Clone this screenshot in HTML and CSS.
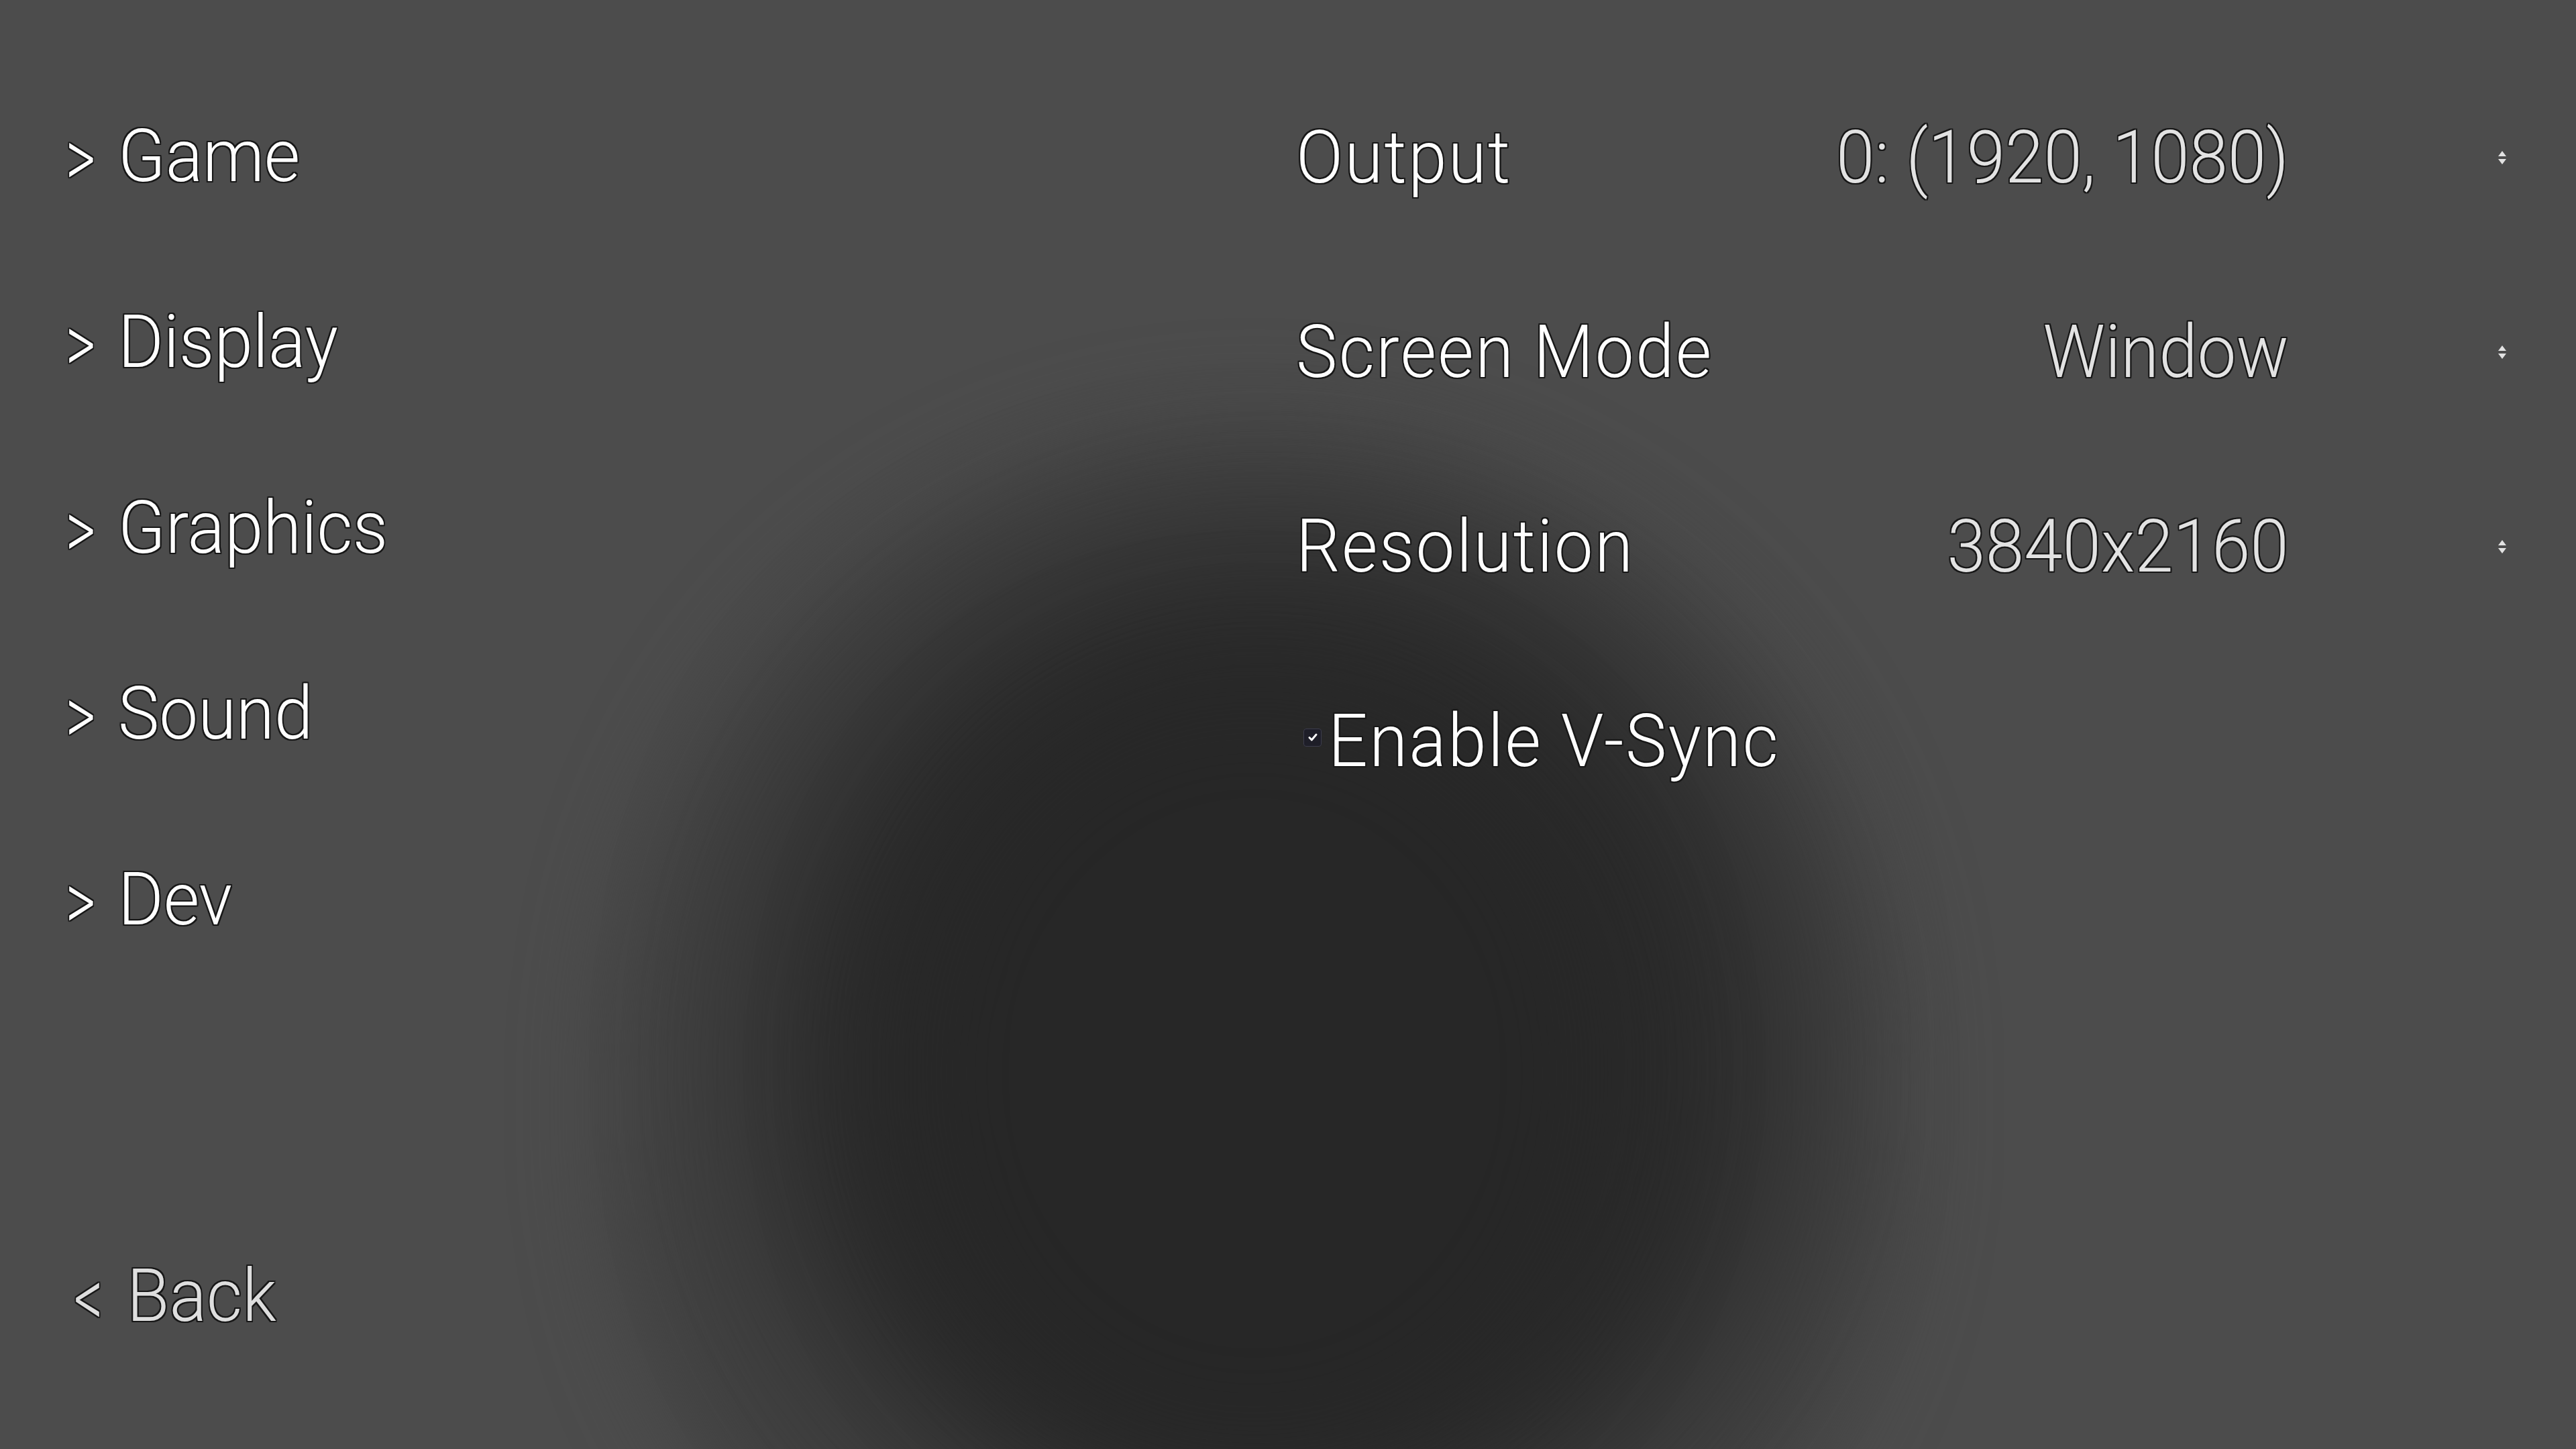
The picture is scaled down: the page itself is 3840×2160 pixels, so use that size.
FILE: index.html
```html
<!DOCTYPE html>
<html lang="en">
<head>
<meta charset="utf-8">
<title>Settings - Display</title>
<link rel="stylesheet" href="styles.css">
</head>
<body>
<div class="screen">
  <div class="backdrop">
    <div class="halo"></div>
    <div class="core"></div>
    <div class="core2"></div>
  </div>

  <nav class="nav">
    <div class="nav-items">
      <div class="nav-item"><span class="chev">&gt;</span><span class="txt">Game</span></div>
      <div class="nav-item"><span class="chev">&gt;</span><span class="txt">Display</span></div>
      <div class="nav-item"><span class="chev">&gt;</span><span class="txt">Graphics</span></div>
      <div class="nav-item"><span class="chev">&gt;</span><span class="txt">Sound</span></div>
      <div class="nav-item"><span class="chev">&gt;</span><span class="txt">Dev</span></div>
    </div>
    <div class="back"><span class="chev back-chev">&lt;</span><span class="txt">Back</span></div>
  </nav>

  <main class="settings">
    <div class="row">
      <span class="label"><span class="txt">Output</span></span>
      <span class="value"><span class="txt">0: (1920, 1080)</span></span>
      <span class="spin"><svg viewBox="0 0 12 20" width="12" height="20"><path d="M0 8 L6 0 L12 8 Z M0 12 L6 20 L12 12 Z" fill="#e2e2e2"/></svg></span>
    </div>
    <div class="row">
      <span class="label"><span class="txt">Screen Mode</span></span>
      <span class="value"><span class="txt">Window</span></span>
      <span class="spin"><svg viewBox="0 0 12 20" width="12" height="20"><path d="M0 8 L6 0 L12 8 Z M0 12 L6 20 L12 12 Z" fill="#e2e2e2"/></svg></span>
    </div>
    <div class="row">
      <span class="label"><span class="txt">Resolution</span></span>
      <span class="value"><span class="txt">3840x2160</span></span>
      <span class="spin"><svg viewBox="0 0 12 20" width="12" height="20"><path d="M0 8 L6 0 L12 8 Z M0 12 L6 20 L12 12 Z" fill="#e2e2e2"/></svg></span>
    </div>
    <div class="row check-row">
      <span class="checkbox"><svg viewBox="0 0 16 16" width="18" height="18"><path d="M3.5 8.5 L6.5 11.5 L12.5 4.5" fill="none" stroke="#ffffff" stroke-width="2.6" stroke-linecap="round" stroke-linejoin="round"/></svg></span>
      <span class="label"><span class="txt">Enable V-Sync</span></span>
    </div>
  </main>
</div>
</body>
</html>
```

FILE: styles.css
```css
html, body {
  margin: 0;
  padding: 0;
}
body {
  background: #4c4c4c;
  font-family: Roboto, "Liberation Sans", Arial, sans-serif;
  font-weight: 300;
  color: #ffffff;
}
.screen {
  position: relative;
  width: 3840px;
  height: 2160px;
  overflow: hidden;
  display: flex;
  background: #4c4c4c;
}

/* blurred dark silhouette behind the menu */
.backdrop {
  position: absolute;
  inset: 0;
  z-index: 0;
}
.halo {
  position: absolute;
  left: 920px;
  top: 640px;
  width: 1900px;
  height: 1900px;
  border-radius: 50% 50% 44% 44%;
  background: #404040;
  filter: blur(70px);
}
.core {
  position: absolute;
  left: 1140px;
  top: 800px;
  width: 1520px;
  height: 1500px;
  border-radius: 50% 50% 46% 46%;
  background: #2a2a2a;
  filter: blur(110px);
}
.core2 {
  position: absolute;
  left: 1320px;
  top: 1000px;
  width: 1100px;
  height: 1200px;
  border-radius: 50%;
  background: #272727;
  filter: blur(90px);
}

.nav, .settings {
  position: relative;
  z-index: 1;
}

.txt, .chev {
  text-shadow:
    2px 0 0 #181818, -2px 0 0 #181818, 0 2px 0 #181818, 0 -2px 0 #181818,
    2px 2px 0 #181818, -2px -2px 0 #181818, 2px -2px 0 #181818, -2px 2px 0 #181818,
    0 0 3px #181818;
}
.txt {
  display: inline-block;
  white-space: nowrap;
  transform: scaleX(0.94);
  transform-origin: left center;
}

/* left navigation */
.nav {
  width: 1834px;
  display: flex;
  flex-direction: column;
  padding-left: 98px;
  padding-top: 94px;
  box-sizing: border-box;
}
.nav-items {
  display: flex;
  flex-direction: column;
}
.nav-item {
  height: 277px;
  display: flex;
  align-items: center;
  font-size: 110px;
  line-height: 1;
}
.chev {
  display: inline-block;
  font-size: 122px;
  width: 78px;
  flex: 0 0 78px;
  transform: scaleX(0.7);
  transform-origin: left center;
  position: relative;
  top: 4px;
}
.back {
  margin-top: 383px;
  padding-left: 12px;
  display: flex;
  align-items: center;
  font-size: 110px;
  line-height: 1;
  color: #dedede;
  height: 140px;
}
.back-chev {
  width: 79px;
  flex: 0 0 79px;
}

/* right settings panel */
.settings {
  flex: 1;
  display: flex;
  flex-direction: column;
  padding-top: 90px;
  padding-left: 98px;
}
.row {
  height: 290px;
  display: flex;
  align-items: center;
  font-size: 110px;
  line-height: 1;
}
.label {
  color: #ffffff;
  width: 700px;
  white-space: nowrap;
  letter-spacing: 2.5px;
}
.value {
  color: #e2e2e2;
  width: 780px;
  text-align: right;
  white-space: nowrap;
}
.value .txt {
  transform-origin: right center;
}
.spin {
  margin-left: 312px;
  display: flex;
  align-items: center;
}
.check-row .label {
  width: auto;
}
.checkbox {
  width: 27px;
  height: 27px;
  margin-left: 11px;
  margin-right: 10px;
  box-sizing: border-box;
  border: 1px solid #3c3c4c;
  border-radius: 4px;
  background: #1e1e28;
  display: flex;
  align-items: center;
  justify-content: center;
  position: relative;
  top: -6px;
}
```
